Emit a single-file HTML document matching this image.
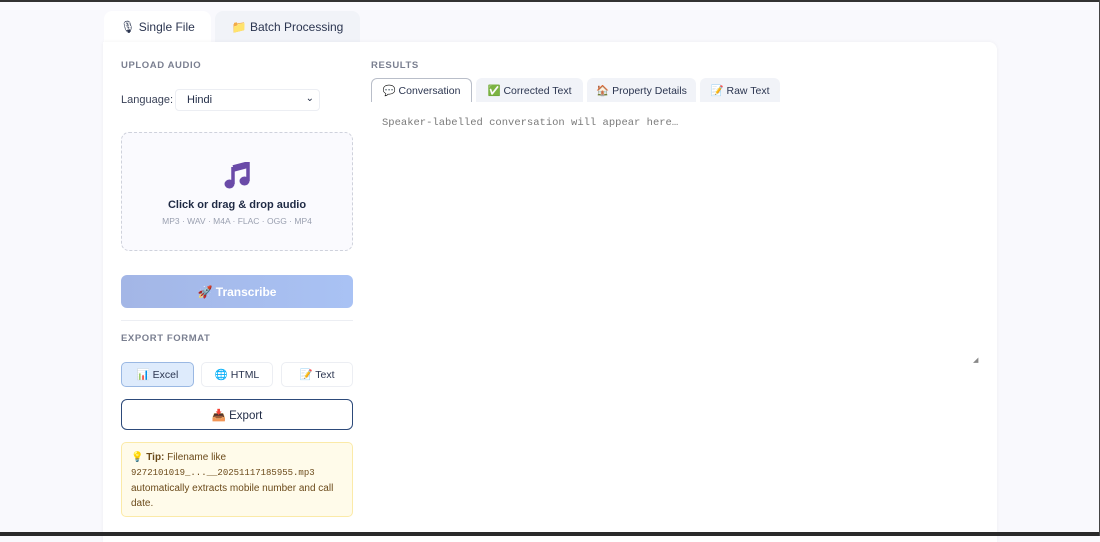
<!DOCTYPE html>
<html><head><meta charset="utf-8"><style>
*{box-sizing:border-box;margin:0;padding:0}
body{width:1100px;height:536px;overflow:hidden;background:#f9f9fd;font-family:"Liberation Sans",sans-serif;color:#1f2a44;position:relative}
.topbar{position:absolute;left:0;top:0;width:1100px;height:2px;background:#333}
.botbar{position:absolute;left:0;top:532px;width:1100px;height:4px;background:#2a2a2a}
.rbar{position:absolute;right:0;top:0;width:1px;height:536px;background:#444}
.tab{position:absolute;top:11px;height:32px;border-radius:8px 8px 0 0;font-size:12px;display:flex;align-items:center;justify-content:center;gap:5px;color:#2b3550}
.card{position:absolute;left:103px;top:42px;width:894px;height:500px;background:#fff;border-radius:0 8px 0 0;box-shadow:0 0 4px rgba(0,0,0,.05)}
.lbl{position:absolute;font-size:9.5px;letter-spacing:.6px;color:#7a7f90;font-weight:bold}
.abs{position:absolute}
.btn{position:absolute;border-radius:5px;display:flex;align-items:center;justify-content:center;font-size:10.5px;gap:4px}
.rt{position:absolute;top:78px;height:24px;border-radius:6px 6px 0 0;background:#f1f3f8;font-size:10.5px;display:flex;align-items:center;justify-content:center;gap:4px;color:#2b3550}
</style></head><body>
<div class="topbar"></div>
<div class="tab" style="left:104px;width:107px;background:#fff">🎙 Single File</div>
<div class="tab" style="left:215px;width:145px;background:#f1f3f8">📁 Batch Processing</div>
<div class="card"></div>
<div class="lbl" style="left:121px;top:60px">UPLOAD AUDIO</div>
<div class="abs" style="left:121px;top:94px;font-size:11px;color:#3a4258">Language:</div>
<div class="abs" style="left:175px;top:89px;width:145px;height:22px;border:1px solid #eceef3;border-radius:4px;font-size:11px;padding:4px 11px;color:#1f2a44">Hindi<span style="position:absolute;right:5px;top:3px;font-size:10px">⌄</span></div>
<div class="abs" style="left:121px;top:132px;width:232px;height:119px;border:1.5px dashed #cfd2dc;border-radius:8px;background:#fafafe;text-align:center">
 <svg style="position:absolute;left:102px;top:29px" width="26" height="27" viewBox="0 0 26 27"><path d="M9 5 L24 1 L24 19" fill="none" stroke="#6a4aa8" stroke-width="3.5"/><path d="M9 5 L9 22" stroke="#6a4aa8" stroke-width="3.5"/><path d="M9 4 L24 0 L24 6 L9 10Z" fill="#6a4aa8"/><ellipse cx="5.5" cy="22" rx="5" ry="4.5" fill="#6a4aa8"/><ellipse cx="20.5" cy="19" rx="5" ry="4.5" fill="#6a4aa8"/></svg>
 <div style="position:absolute;left:0;right:0;top:66px;font-size:11px;font-weight:bold;color:#1f2a44">Click or drag &amp; drop audio</div>
 <div style="position:absolute;left:0;right:0;top:83px;font-size:8.5px;color:#9aa0b0">MP3 · WAV · M4A · FLAC · OGG · MP4</div>
</div>
<div class="btn" style="left:121px;top:275px;width:232px;height:33px;background:linear-gradient(90deg,#a3b6e6,#a9c2f4);color:#fff;font-weight:bold;font-size:12px;border-radius:6px">🚀 Transcribe</div>
<div class="abs" style="left:121px;top:320px;width:232px;height:1px;background:#eceef3"></div>
<div class="lbl" style="left:121px;top:333px">EXPORT FORMAT</div>
<div class="btn" style="left:121px;top:362px;width:73px;height:25px;background:#deebfc;border:1px solid #9ab8e3;color:#2b3550">📊 Excel</div>
<div class="btn" style="left:201px;top:362px;width:72px;height:25px;border:1px solid #eceef3;color:#2b3550">🌐 HTML</div>
<div class="btn" style="left:281px;top:362px;width:72px;height:25px;border:1px solid #eceef3;color:#2b3550">📝 Text</div>
<div class="btn" style="left:121px;top:399px;width:232px;height:31px;border:1.5px solid #2d4a7a;border-radius:6px;color:#1f2a44;font-size:11.5px">📥 Export</div>
<div class="abs" style="left:121px;top:442px;width:232px;height:75px;background:#fffbea;border:1px solid #fbeaa8;border-radius:5px;padding:7px 9px;font-size:10px;line-height:15px;color:#6b4a1a">💡 <b>Tip:</b> Filename like<br><span style="font-family:'Liberation Mono',monospace;font-size:9px">9272101019_...__20251117185955.mp3</span><br>automatically extracts mobile number and call date.</div>
<div class="lbl" style="left:371px;top:60px">RESULTS</div>
<div class="rt" style="left:371px;width:101px;background:#fff;border:1px solid #b9bec9;border-bottom:none">💬 Conversation</div>
<div class="rt" style="left:476px;width:107px">✅ Corrected Text</div>
<div class="rt" style="left:587px;width:109px">🏠 Property Details</div>
<div class="rt" style="left:700px;width:80px">📝 Raw Text</div>
<div class="abs" style="left:382px;top:117px;font-family:'Liberation Mono',monospace;font-size:10.5px;color:#7a7a7a">Speaker-labelled conversation will appear here…</div>
<div class="abs" style="left:973px;top:356px;font-size:7px;color:#888">◢</div>
<div class="botbar"></div><div class="rbar"></div>
</body></html>
